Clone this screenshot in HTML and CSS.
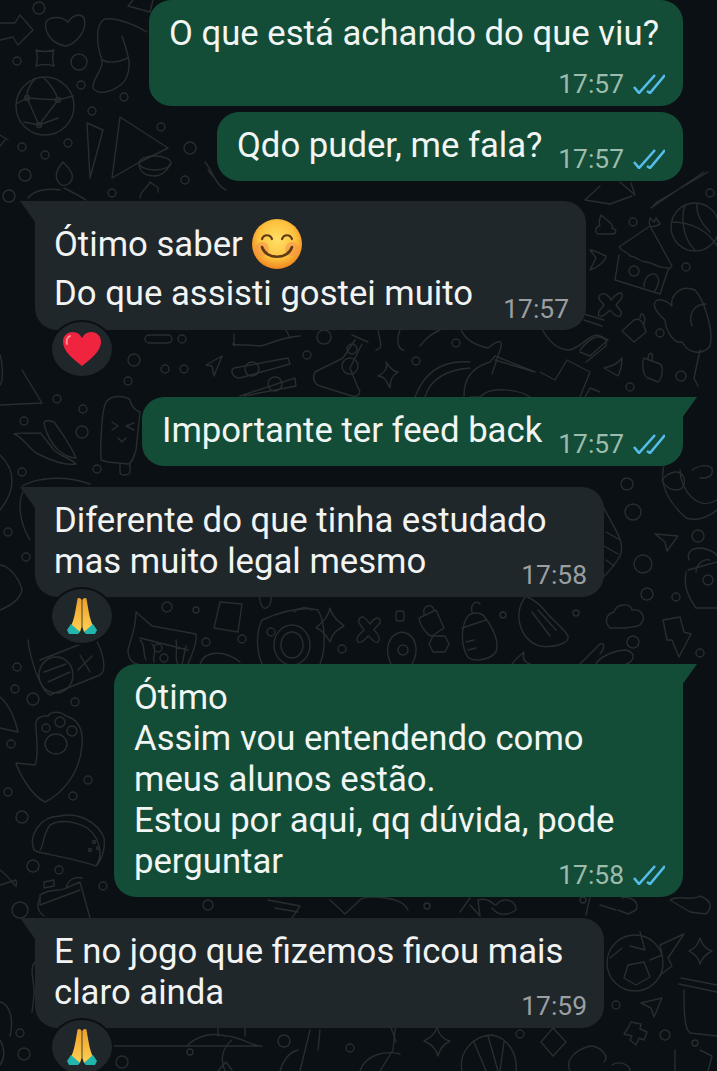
FILE: index.html
```html
<!DOCTYPE html>
<html lang="pt-BR">
<head>
    <meta charset="UTF-8">
    <meta name="viewport" content="width=device-width, initial-scale=1.0">
    <title>Conversa</title>
    <link rel="stylesheet" href="styles.css">
</head>
<body>
    <svg class="wallpaper" width="717" height="1071" viewBox="0 0 717 1071" fill="none">
        <g class="dots">
            <circle cx="39" cy="8" r="6"/><circle cx="17" cy="61" r="4"/><circle cx="79" cy="62" r="8"/><circle cx="81" cy="85" r="4"/>
            <circle cx="124" cy="97" r="4"/><circle cx="92" cy="111" r="4"/><circle cx="161" cy="127" r="4"/><circle cx="190" cy="148" r="6"/>
            <circle cx="68" cy="143" r="4"/><circle cx="22" cy="147" r="4"/><circle cx="45" cy="155" r="4"/><circle cx="25" cy="175" r="6"/>
            <circle cx="9" cy="196" r="6"/><circle cx="112" cy="193" r="4"/><circle cx="185" cy="180" r="4"/>
            <circle cx="633" cy="222" r="4"/><circle cx="686" cy="267" r="4"/><circle cx="660" cy="333" r="4"/><circle cx="681" cy="376" r="5"/>
            <circle cx="630" cy="387" r="4"/><circle cx="710" cy="193" r="4"/>
            <circle cx="57" cy="399" r="4"/><circle cx="83" cy="409" r="4"/><circle cx="24" cy="421" r="4"/><circle cx="82" cy="432" r="6"/>
            <circle cx="22" cy="472" r="4"/><circle cx="97" cy="469" r="4"/><circle cx="8" cy="532" r="4"/><circle cx="26" cy="557" r="4"/><circle cx="128" cy="381" r="4"/>
            <circle cx="182" cy="339" r="4"/><circle cx="134" cy="360" r="6"/><circle cx="165" cy="369" r="4"/><circle cx="184" cy="369" r="4"/>
            <circle cx="307" cy="355" r="4"/><circle cx="416" cy="361" r="4"/><circle cx="324" cy="337" r="7"/><circle cx="456" cy="343" r="4"/>
            <circle cx="167" cy="607" r="5"/><circle cx="196" cy="610" r="3"/><circle cx="206" cy="642" r="4"/><circle cx="242" cy="639" r="4"/>
            <circle cx="503" cy="615" r="3"/><circle cx="576" cy="613" r="3"/><circle cx="633" cy="642" r="6"/><circle cx="700" cy="653" r="4"/>
            <circle cx="342" cy="649" r="4"/><circle cx="627" cy="484" r="6"/><circle cx="633" cy="512" r="8"/><circle cx="643" cy="564" r="9"/>
            <circle cx="647" cy="594" r="6"/><circle cx="676" cy="597" r="4"/><circle cx="698" cy="536" r="6"/>
            <circle cx="17" cy="667" r="4"/><circle cx="15" cy="689" r="4"/><circle cx="33" cy="699" r="6"/><circle cx="75" cy="702" r="4"/>
            <circle cx="11" cy="744" r="4"/><circle cx="88" cy="780" r="4"/><circle cx="8" cy="792" r="4"/><circle cx="73" cy="796" r="4"/>
            <circle cx="22" cy="817" r="6"/><circle cx="33" cy="866" r="6"/><circle cx="59" cy="870" r="4"/><circle cx="103" cy="886" r="4"/><circle cx="20" cy="910" r="8"/>
            <circle cx="208" cy="905" r="5"/><circle cx="427" cy="906" r="3"/><circle cx="583" cy="900" r="3"/><circle cx="20" cy="1033" r="4"/>
            <circle cx="24" cy="1054" r="6"/><circle cx="122" cy="1062" r="6"/><circle cx="190" cy="1052" r="3"/><circle cx="284" cy="1041" r="6"/>
            <circle cx="350" cy="1048" r="4"/><circle cx="520" cy="1034" r="4"/><circle cx="665" cy="1035" r="5"/><circle cx="695" cy="1043" r="3"/><circle cx="616" cy="1005" r="4"/>
        </g>
        <g class="doodles">
            <!-- arrow -->
            <path d="M0 23 L15 23 L20 15 L33 30 L18 45 L13 37 L0 40"/>
            <!-- boot and heart -->
            <path d="M46 22 C44 30 50 44 66 46 C76 44 88 30 84 18 C80 12 72 16 68 22 C62 16 50 16 46 22 Z"/>
            <path d="M147 32 C130 22 110 16 103 20 C96 26 96 44 102 60 C104 70 92 78 93 88 C98 96 112 92 122 84 C130 76 130 62 128 56 C126 48 124 42 122 36"/>
            <path d="M102 60 C110 64 118 62 128 58"/>
            <path d="M128 6 L150 12 L153 0 M133 0 L128 6"/>
            <!-- star -->
            <path d="M36 50 C42 52 48 52 54 50 C52 56 52 60 54 66 C48 64 42 64 36 66 C38 60 38 56 36 50 Z"/>
            <!-- globe -->
            <circle cx="45" cy="106" r="29"/>
            <path d="M27 98 L58 100 M27 98 L39 125 M39 125 L58 100 M58 100 C56 92 50 84 44 78 M27 98 C26 90 30 84 36 78 M39 125 L24 122 M39 125 L58 118 M58 100 L73 96 M27 98 L16 104"/>
            <circle cx="27" cy="98" r="2.5"/><circle cx="58" cy="100" r="2.5"/><circle cx="39" cy="125" r="2.5"/>
            <!-- tent -->
            <path d="M87 123 L103 130 L90 178 Z M120 117 L168 148 L138 163 L112 178 Z"/>
            <ellipse cx="155" cy="163" rx="16" ry="7"/>
            <path d="M139 165 C140 172 146 176 154 176 C162 176 168 170 170 164"/>
            <!-- flame and bowl -->
            <path d="M63 162 C56 170 54 178 60 184 C66 188 74 182 72 174 C70 168 66 166 63 162 Z M28 198 C34 190 48 188 60 190 M64 188 C72 192 80 196 86 200"/>
            <path d="M140 198 C140 190 148 188 150 182 C154 186 160 186 158 192"/>
            <path d="M205 162 C212 170 216 186 226 190 M208 170 L216 180"/>
            <path d="M5 140 L0 146 M0 135 L8 140"/>
            <!-- chopsticks -->
            <path d="M657 202 L708 172 M651 208 L704 172 M657 202 L651 208"/>
            <path d="M600 186 L585 200 L610 204 L632 196 M620 182 L635 195 L631 183"/>
            <!-- basketball -->
            <circle cx="695" cy="227" r="24"/>
            <path d="M672 222 C690 222 708 230 717 246 M685 205 C680 220 684 240 695 250 M697 204 C696 212 700 222 710 232"/>
            <!-- poop -->
            <path d="M601 215 C612 224 614 226 612 228 C618 230 616 234 612 234 L598 234 C594 232 596 226 600 226 C598 222 600 218 601 215 Z"/>
            <!-- heart blob -->
            <path d="M590 250 C595 250 600 254 606 256 C606 260 598 268 590 270 L596 258 Z"/>
            <!-- house -->
            <path d="M619 247 L650 226 L672 266 L668 270 M619 247 C622 252 628 252 630 256 C636 256 640 262 646 262 C652 262 656 268 668 268 M619 255 L615 280 L660 294 L668 270"/>
            <circle cx="634" cy="271" r="5"/>
            <path d="M644 287 C644 274 656 270 658 278 C660 282 656 290 654 292"/>
            <path d="M650 226 C648 222 650 220 650 218 L654 222 L656 218 L660 224 C656 226 652 228 650 226"/>
            <!-- flower -->
            <path d="M695 290 C680 284 670 296 672 306 C662 294 642 300 665 320 C666 334 676 344 682 342 C690 356 704 354 710 346 C714 330 704 300 695 290 Z M706 304 C694 304 688 314 692 326"/>
            <path d="M700 350 L694 378 L698 386"/>
            <!-- x -->
            <path d="M600 295 C604 291 610 297 611 300 C614 296 620 291 622 294 C624 298 618 302 616 305 C618 308 624 312 620 316 C616 318 612 312 610 310 C606 314 602 318 599 316 C596 312 602 308 604 305 C602 302 596 298 600 295 Z"/>
            <!-- locks -->
            <path d="M622 331 L634 320 C638 318 642 320 644 326 L646 332 L634 342 Z M640 318 C640 314 642 312 644 316 C646 320 644 322 644 324"/>
            <path d="M644 358 L660 364 C664 366 662 380 658 382 L648 378 C642 376 642 362 644 358 Z M648 360 C648 352 654 350 652 360"/>
            <path d="M604 368 C612 366 618 364 622 358 C622 366 620 372 618 376 Z"/>
            <!-- stick -->
            <path d="M584 314 L604 320 M584 320 L602 326 M580 350 C588 340 598 332 606 340 L606 346 L586 362"/>
            <!-- pizza corner -->
            <path d="M0 405 L42 403 L22 370 M0 355 C2 360 4 380 0 385"/>
            <!-- popsicle -->
            <path d="M101 460 C100 440 102 410 106 402 C112 394 126 396 130 400 C132 410 140 412 140 412 L136 450 C134 456 132 464 128 464 L108 462 Z"/>
            <path d="M120 465 L120 472 C120 476 128 476 130 472 L130 464 M112 422 L118 426 L112 430 M134 423 L126 426 L134 430 M118 438 L122 442 L126 438"/>
            <!-- peppers -->
            <path d="M40 433 C30 434 20 432 14 434 C22 436 30 450 38 454 C50 460 64 466 76 464 C70 458 60 456 54 450 C46 440 40 432 40 433 Z"/>
            <path d="M44 424 C46 432 50 442 58 450 C66 456 70 458 76 458 C72 448 60 430 54 422 C48 420 44 420 44 424 Z"/>
            <!-- tube -->
            <path d="M22 486 C40 476 68 476 90 484 M24 490 C18 500 18 520 30 540 M0 455 C16 470 16 490 0 510"/>
            <path d="M0 565 C10 566 20 580 22 590 C20 600 10 606 0 610"/>
            <!-- pill and bar shapes under bubble -->
            <rect x="145" y="335" width="27" height="8" rx="4"/>
            <path d="M206 365 L222 356 L214 376 L212 366 Z"/>
            <path d="M234 368 L288 358 L290 364 L240 378 C232 378 230 370 234 368 Z M240 396 L295 378 L296 386 L244 396"/>
            <circle cx="252" cy="369" r="7"/><circle cx="275" cy="384" r="7"/>
            <path d="M232 344 C240 346 250 344 258 346 C268 346 276 338 300 336 M234 334 L234 346 M286 330 L290 338"/>
            <!-- flask -->
            <path d="M352 335 L368 342 M355 340 L343 358 L315 372 C312 378 314 384 320 386 L352 396 C358 398 362 392 358 388 L350 368 L362 344"/>
            <circle cx="350" cy="366" r="8"/><circle cx="352" cy="349" r="5"/>
            <!-- star 2 -->
            <path d="M378 376 C386 372 388 366 386 362 C390 368 394 372 398 372 C392 376 390 380 390 388 C386 380 384 376 378 376 Z"/>
            <path d="M378 330 C380 342 384 348 376 350 M400 330 C396 340 398 350 404 350 M420 346 C424 342 426 336 440 330"/>
            <path d="M460 326 C462 336 470 344 488 348 C498 340 504 338 500 350 L492 374 M540 326 C548 340 556 350 570 350 C584 346 590 332 600 336 L608 340 L590 356 L580 352"/>
            <!-- scooter -->
            <path d="M415 397 C425 370 445 360 470 362 M425 397 C430 380 445 370 470 368 M464 396 C464 380 470 368 490 362 L495 356 L535 372 L495 360 M530 397 C520 390 490 385 480 397 L470 397 M540 372 L555 380 L567 360 L590 372 L580 397"/>
            <path d="M585 397 L590 388 L600 392"/>
            <!-- cat -->
            <path d="M136 612 C136 630 130 640 128 650 C128 660 134 664 138 664 M136 612 L152 626 L196 634 C198 644 190 658 188 664"/>
            <path d="M140 640 C146 645 142 652 146 660 M152 644 C158 650 152 656 154 662 M176 640 C178 650 174 658 178 664 M186 646 C184 652 184 658 182 664 M140 638 L188 650"/>
            <circle cx="158" cy="648" r="4"/><circle cx="164" cy="658" r="4"/>
            <path d="M200 664 C205 650 225 650 240 662"/>
            <!-- square -->
            <path d="M220 602 L242 604 L238 632 L214 628 Z"/>
            <path d="M260 590 C258 600 262 610 266 608 C272 606 272 596 270 590"/>
            <!-- camera -->
            <path d="M262 620 C280 612 300 606 318 610 C326 624 326 650 320 664 M262 620 C256 632 256 650 262 664"/>
            <path d="M294 612 C298 608 306 606 312 610"/>
            <ellipse cx="292" cy="645" rx="18" ry="20"/><ellipse cx="292" cy="645" rx="11" ry="13"/><circle cx="271" cy="632" r="4"/>
            <path d="M330 608 C332 618 340 622 344 626 C336 630 332 634 330 642 C326 634 322 630 316 628 C322 622 328 618 330 608 Z"/>
            <!-- x 2 -->
            <path d="M360 618 C364 614 368 622 370 624 C374 618 378 616 380 620 C382 624 374 628 374 630 C376 632 382 638 378 642 C374 644 370 636 368 636 C366 638 362 644 358 642 C354 638 362 632 364 630 C362 626 356 622 360 618 Z"/>
            <rect x="396" y="611" width="8" height="10" rx="2"/>
            <!-- lock 3 -->
            <path d="M419 618 L436 610 L444 628 L432 636 C428 636 420 626 419 618 Z M424 614 C422 606 432 602 434 610"/>
            <!-- egg -->
            <path d="M391 664 C384 650 388 634 402 632 C416 634 420 650 412 664"/>
            <circle cx="403" cy="650" r="5"/>
            <path d="M433 636 L445 636 L449 644 L445 652 L433 652 L429 644 Z"/>
            <!-- bottle -->
            <path d="M468 616 C462 624 460 640 466 654 C470 664 490 660 496 652 C500 640 490 624 484 616 C480 612 472 612 468 616 Z M462 628 L486 620 M466 642 L474 640 M468 650 L476 648 M472 612 C470 604 476 600 480 604"/>
            <!-- hang loose -->
            <path d="M526 596 C512 614 520 640 540 646 C552 648 570 644 568 636 C564 628 552 620 546 612 C540 604 530 598 526 596 Z M532 612 L550 636 M538 610 L556 630"/>
            <path d="M512 664 C516 658 520 656 524 652 C522 658 524 662 530 664"/>
            <path d="M580 664 L600 644 C606 642 604 650 600 654 M596 664 C600 656 616 650 626 650 C640 654 630 664 626 664"/>
            <!-- cloud -->
            <path d="M610 628 C604 622 606 614 614 612 C616 604 630 602 632 610 C640 608 646 616 642 622 C640 628 632 626 626 628 Z"/>
            <!-- paper plane -->
            <path d="M655 534 L678 536 L667 551 L665 542 Z"/>
            <!-- lightning -->
            <path d="M663 620 L680 617 L684 632 L691 634 L679 657 L672 640 L667 640 Z"/>
            <!-- big lock -->
            <path d="M689 560 C686 550 694 548 702 548 C710 550 716 552 717 556 M696 572 C696 566 702 558 710 560 M688 570 L717 562 M686 572 C684 584 686 594 696 608 L717 608"/>
            <circle cx="708" cy="580" r="5"/>
            <!-- heart moon -->
            <path d="M666 460 C658 478 664 498 686 518 C698 522 710 516 717 510 M680 470 C680 490 698 512 717 500"/>
            <path d="M662 480 C668 472 680 468 684 478 C686 488 680 490 676 490 C670 490 664 486 662 480 Z M692 470 C698 466 706 464 712 468 C714 478 706 478 700 478"/>
            <!-- grid ball -->
            <path d="M600 500 C614 530 626 540 620 556 C612 570 604 576 600 580 M606 532 L620 540 M604 546 L618 554 M606 560 L614 566"/>
            <!-- paw -->
            <path d="M35 765 C40 755 35 730 36 722 C38 715 45 716 48 716 C52 710 62 712 66 716 C74 718 84 725 82 745 C80 775 60 795 45 802 C30 795 18 770 16 763 Z"/>
            <circle cx="46" cy="728" r="4"/><circle cx="60" cy="722" r="5"/><circle cx="72" cy="731" r="5"/><ellipse cx="56" cy="744" rx="11" ry="10"/>
            <!-- calculator -->
            <path d="M28 640 C30 658 40 690 50 695 L100 675 C108 670 102 650 96 640"/>
            <ellipse cx="56" cy="675" rx="17" ry="18"/>
            <path d="M40 660 L86 642 M44 672 L66 664 M48 682 L70 672 M80 655 L90 672 M92 656 L78 670"/>
            <!-- pizza -->
            <path d="M0 697 C10 705 16 722 18 732 L0 728"/>
            <!-- taco -->
            <path d="M34 850 C28 836 40 816 60 816 C78 812 98 822 104 838 C106 850 100 862 96 866 C80 860 56 856 38 852 Z M50 825 C62 818 88 822 96 838 C102 850 100 860 96 866 M50 825 C42 836 44 846 40 850"/>
            <circle cx="94" cy="842" r="1.5"/><circle cx="90" cy="850" r="1.5"/><circle cx="98" cy="848" r="1.5"/>
            <!-- bottle -->
            <path d="M40 905 L40 895 C50 888 60 892 66 888 L80 882 L90 918 M40 905 L80 890 M44 882 L54 880 L54 886 L44 888 Z M66 888 C68 880 74 876 82 878"/>
            <path d="M0 870 C14 880 18 895 16 880 L0 885"/>
            <!-- bottom strip -->
            <path d="M590 897 L586 915 M600 905 L616 910 M268 900 L300 906 L292 918 M275 908 L298 912 M330 900 L345 914 L360 900 C362 895 402 895 408 910 M470 898 L460 912 M470 905 L480 916 L478 900 C484 898 490 900 495 905 M492 908 C498 916 508 916 516 910 C516 900 504 896 496 905"/>
            <path d="M622 898 C630 895 640 902 636 910 L628 914 L618 910 M670 900 C680 894 690 902 700 896 C710 900 714 906 706 914 L690 912 Z"/>
            <path d="M40 898 C36 905 38 912 44 916"/>
            <!-- soccer ball -->
            <circle cx="635" cy="963" r="28"/>
            <path d="M630 946 L645 950 L640 932 M622 948 L610 958 M628 965 L644 962 L650 977 L636 985 L624 978 Z M650 960 L662 955 L660 945 L684 934 L668 958 L672 966 L660 975"/>
            <path d="M700 938 C702 946 708 950 712 951 C706 954 702 958 700 964 C698 956 694 954 689 951 C696 948 698 944 700 938 Z"/>
            <!-- pot -->
            <path d="M681 978 L717 985 M679 984 L717 992 M684 990 C684 1010 684 1028 690 1033 L717 1036"/>
            <path d="M641 1003 L662 998 L654 1017 L651 1008 Z"/>
            <path d="M631 1022 L641 1024 L640 1029 L647 1032 L644 1040 L639 1038 L636 1045 L630 1040 L632 1036 L624 1034 L628 1028 Z"/>
            <path d="M553 1028 L566 1042 L553 1056 L541 1042 Z M590 1046 C600 1046 610 1056 604 1062 M570 1071 C565 1060 575 1050 590 1046 M612 1065 C620 1060 630 1065 630 1071"/>
            <path d="M675 1071 L675 1050 M700 1050 L712 1056 L708 1071"/>
            <!-- croissant -->
            <path d="M462 1071 C458 1052 474 1035 492 1035 C508 1038 518 1054 516 1071 M474 1042 L486 1071 M488 1036 L498 1071 M504 1042 L500 1071"/>
            <path d="M437 1026 C438 1034 444 1040 450 1041 C444 1044 440 1048 438 1056 C436 1048 432 1044 424 1041 C430 1038 436 1034 437 1026 Z"/>
            <path d="M396 1021 L393 1050 L380 1071 M390 1025 C392 1030 394 1036 396 1042 M360 1071 C365 1055 385 1050 400 1054"/>
            <path d="M112 1046 L262 1046 M187 1046 C196 1036 212 1032 226 1036 C236 1036 246 1042 258 1046 M218 1028 L218 1036 M245 1028 L245 1036"/>
            <path d="M310 1030 L300 1071 M320 1030 L318 1050 M280 1071 C284 1058 290 1052 298 1050"/>
            <path d="M225 1071 C220 1060 222 1048 232 1040 M218 1071 L226 1062 L232 1070"/>
            <path d="M0 1002 C10 1004 14 1020 10 1036 M0 1040 C6 1050 4 1060 0 1065 M35 962 C28 970 36 985 34 996 L32 1012"/>
        </g>
    </svg>

    <main class="chat">
        <div class="bubble out w-534 first-out">
            <div class="text">O que está achando do que viu?</div>
            <div class="meta gap-below"><span>17:57</span>
                <svg class="ticks" viewBox="0 0 32 20" fill="none"><path d="M1 13 L6 19 L22 1 M14 17 L17 19 L32 1"/></svg>
            </div>
        </div>
        <div class="bubble out w-466 next">
            <div class="text">Qdo puder, me fala?</div>
            <div class="meta"><span>17:57</span>
                <svg class="ticks" viewBox="0 0 32 20" fill="none"><path d="M1 13 L6 19 L22 1 M14 17 L17 19 L32 1"/></svg>
            </div>
        </div>

        <div class="bubble in w-551 group tail with-emoji">
            <div class="text">
                <div class="emoji-line">Ótimo saber
                    <svg class="smile" viewBox="0 0 50 50">
                        <defs>
                            <radialGradient id="face" cx="50%" cy="42%" r="58%">
                                <stop offset="0" stop-color="#ffe067"/>
                                <stop offset="0.65" stop-color="#fcc13d"/>
                                <stop offset="1" stop-color="#f0861f"/>
                            </radialGradient>
                        </defs>
                        <circle cx="25" cy="25" r="25" fill="url(#face)"/>
                        <circle cx="10" cy="30" r="7" fill="#f7904a" opacity="0.55"/>
                        <circle cx="40" cy="30" r="7" fill="#f7904a" opacity="0.55"/>
                        <path d="M10 20 C12 15 18 15 20 20 M30 20 C32 15 38 15 40 20" fill="none" stroke="#5f3a12" stroke-width="2.2" stroke-linecap="round"/>
                        <path d="M10 28 C14 41 36 41 40 28" fill="none" stroke="#5f3a12" stroke-width="2.6" stroke-linecap="round"/>
                    </svg>
                </div>
                Do que assisti gostei muito
            </div>
            <div class="meta"><span>17:57</span></div>
        </div>
        <div class="reaction">
            <svg class="heart" viewBox="0 0 38 34"><path d="M19 34 C10 27 0 19 0 10 C0 3 5 0 10 0 C14 0 17 2 19 6 C21 2 24 0 28 0 C33 0 38 3 38 10 C38 19 28 27 19 34 Z" fill="#f0243f"/><path d="M7 4 C4 5 3 9 4 12" fill="none" stroke="#ff8f9b" stroke-width="2" stroke-linecap="round"/></svg>
        </div>

        <div class="bubble out w-541 tail after-reaction">
            <div class="text">Importante ter feed back</div>
            <div class="meta"><span>17:57</span>
                <svg class="ticks" viewBox="0 0 32 20" fill="none"><path d="M1 13 L6 19 L22 1 M14 17 L17 19 L32 1"/></svg>
            </div>
        </div>

        <div class="bubble in w-569 group tail">
            <div class="text">Diferente do que tinha estudado<br>mas muito legal mesmo</div>
            <div class="meta"><span>17:58</span></div>
        </div>
        <div class="reaction">
            <svg class="hands" viewBox="0 0 30 38">
                <defs>
                    <linearGradient id="palm" x1="0" y1="0" x2="0" y2="1">
                        <stop offset="0" stop-color="#ee9f2b"/>
                        <stop offset="1" stop-color="#ffd052"/>
                    </linearGradient>
                </defs>
                <path d="M14.6 3 C14 1 11 0 10.5 2 C9 10 8 18 6 24 L4 29 L13 35 L14.6 30 Z" fill="url(#palm)"/>
                <path d="M15.4 3 C16 1 19 0 19.5 2 C21 10 22 18 24 24 L26 29 L17 35 L15.4 30 Z" fill="url(#palm)"/>
                <path d="M4 27 L0 33 L2 37 L11 37 L13 35 Z M26 27 L30 33 L28 37 L19 37 L17 35 Z" fill="#22b5ad"/>
            </svg>
        </div>

        <div class="bubble out w-569 tail after-reaction">
            <div class="text">Ótimo<br>Assim vou entendendo como<br>meus alunos estão.<br>Estou por aqui, qq dúvida, pode<br>perguntar</div>
            <div class="meta"><span>17:58</span>
                <svg class="ticks" viewBox="0 0 32 20" fill="none"><path d="M1 13 L6 19 L22 1 M14 17 L17 19 L32 1"/></svg>
            </div>
        </div>

        <div class="bubble in w-569 group tail">
            <div class="text">E no jogo que fizemos ficou mais<br>claro ainda</div>
            <div class="meta"><span>17:59</span></div>
        </div>
        <div class="reaction">
            <svg class="hands" viewBox="0 0 30 38">
                <path d="M14.6 3 C14 1 11 0 10.5 2 C9 10 8 18 6 24 L4 29 L13 35 L14.6 30 Z" fill="url(#palm)"/>
                <path d="M15.4 3 C16 1 19 0 19.5 2 C21 10 22 18 24 24 L26 29 L17 35 L15.4 30 Z" fill="url(#palm)"/>
                <path d="M4 27 L0 33 L2 37 L11 37 L13 35 Z M26 27 L30 33 L28 37 L19 37 L17 35 Z" fill="#22b5ad"/>
            </svg>
        </div>
    </main>
</body>
</html>
```

FILE: styles.css
```css
* {
    box-sizing: border-box;
    margin: 0;
    padding: 0;
}
body {
    width: 717px;
    height: 1071px;
    overflow: hidden;
    position: relative;
    background-color: #0b1014;
    font-family: Roboto, "Liberation Sans", sans-serif;
}
.wallpaper {
    position: absolute;
    top: 0;
    left: 0;
    stroke: #282d30;
    stroke-width: 1.4;
    stroke-linejoin: round;
    stroke-linecap: round;
}
.chat {
    position: relative;
    display: flex;
    flex-direction: column;
    padding: 0 34px 0 35px;
}
.bubble {
    position: relative;
    flex: none;
    display: flex;
    flex-direction: column;
    border-radius: 22px;
    padding: 13px 18px 7px 19px;
}
.out {
    align-self: flex-end;
    background-color: #144d37;
    padding-left: 20px;
    color: #f1f5f3;
}
.in {
    align-self: flex-start;
    background-color: #1f272b;
    padding-right: 17px;
    color: #f2f3f3;
}
.w-466 { width: 466px; }
.w-534 { width: 534px; }
.w-541 { width: 541px; }
.w-551 { width: 551px; }
.w-569 { width: 569px; }
.next {
    margin-top: 6px;
}
.group {
    margin-top: 21px;
}
.first-out + .next + .group {
    margin-top: 20px;
}
.after-reaction {
    margin-top: 21px;
}
.tail.out {
    border-top-right-radius: 0;
}
.tail.in {
    border-top-left-radius: 0;
}
.tail::before {
    content: "";
    position: absolute;
    top: 0;
    width: 15px;
    height: 21px;
    background-color: inherit;
}
.tail.out::before {
    right: -14px;
    clip-path: polygon(0 0, 100% 0, 0 100%);
}
.tail.in::before {
    left: -15px;
    clip-path: polygon(0 0, 100% 0, 100% 100%);
}
.text {
    font-size: 34.7px;
    line-height: 41px;
}
.emoji-line {
    display: flex;
    align-items: center;
    gap: 9px;
    height: 58px;
    margin-top: 1px;
}
.smile {
    width: 50px;
    height: 50px;
    flex: none;
}
.meta {
    align-self: flex-end;
    display: flex;
    align-items: center;
    gap: 9px;
    height: 30px;
    margin-top: -22px;
    font-size: 26.4px;
}
.meta.gap-below {
    margin-top: 15px;
}
.with-emoji {
    padding-bottom: 6px;
}
.with-emoji .meta {
    margin-top: -20px;
}
.out .meta {
    color: #9dbcad;
}
.in .meta {
    color: #9b9fa1;
}
.ticks {
    width: 32px;
    height: 20px;
    stroke: #53bdeb;
    stroke-width: 2.6;
}
.reaction {
    position: relative;
    flex: none;
    display: flex;
    align-items: center;
    justify-content: center;
    width: 60px;
    height: 54px;
    margin: -8px 0 0 17px;
    border-radius: 50%;
    background-color: #1f272b;
    box-shadow: 0 0 0 2px #0b1014;
}
.heart {
    width: 38px;
    height: 34px;
}
.hands {
    width: 30px;
    height: 38px;
}
```
